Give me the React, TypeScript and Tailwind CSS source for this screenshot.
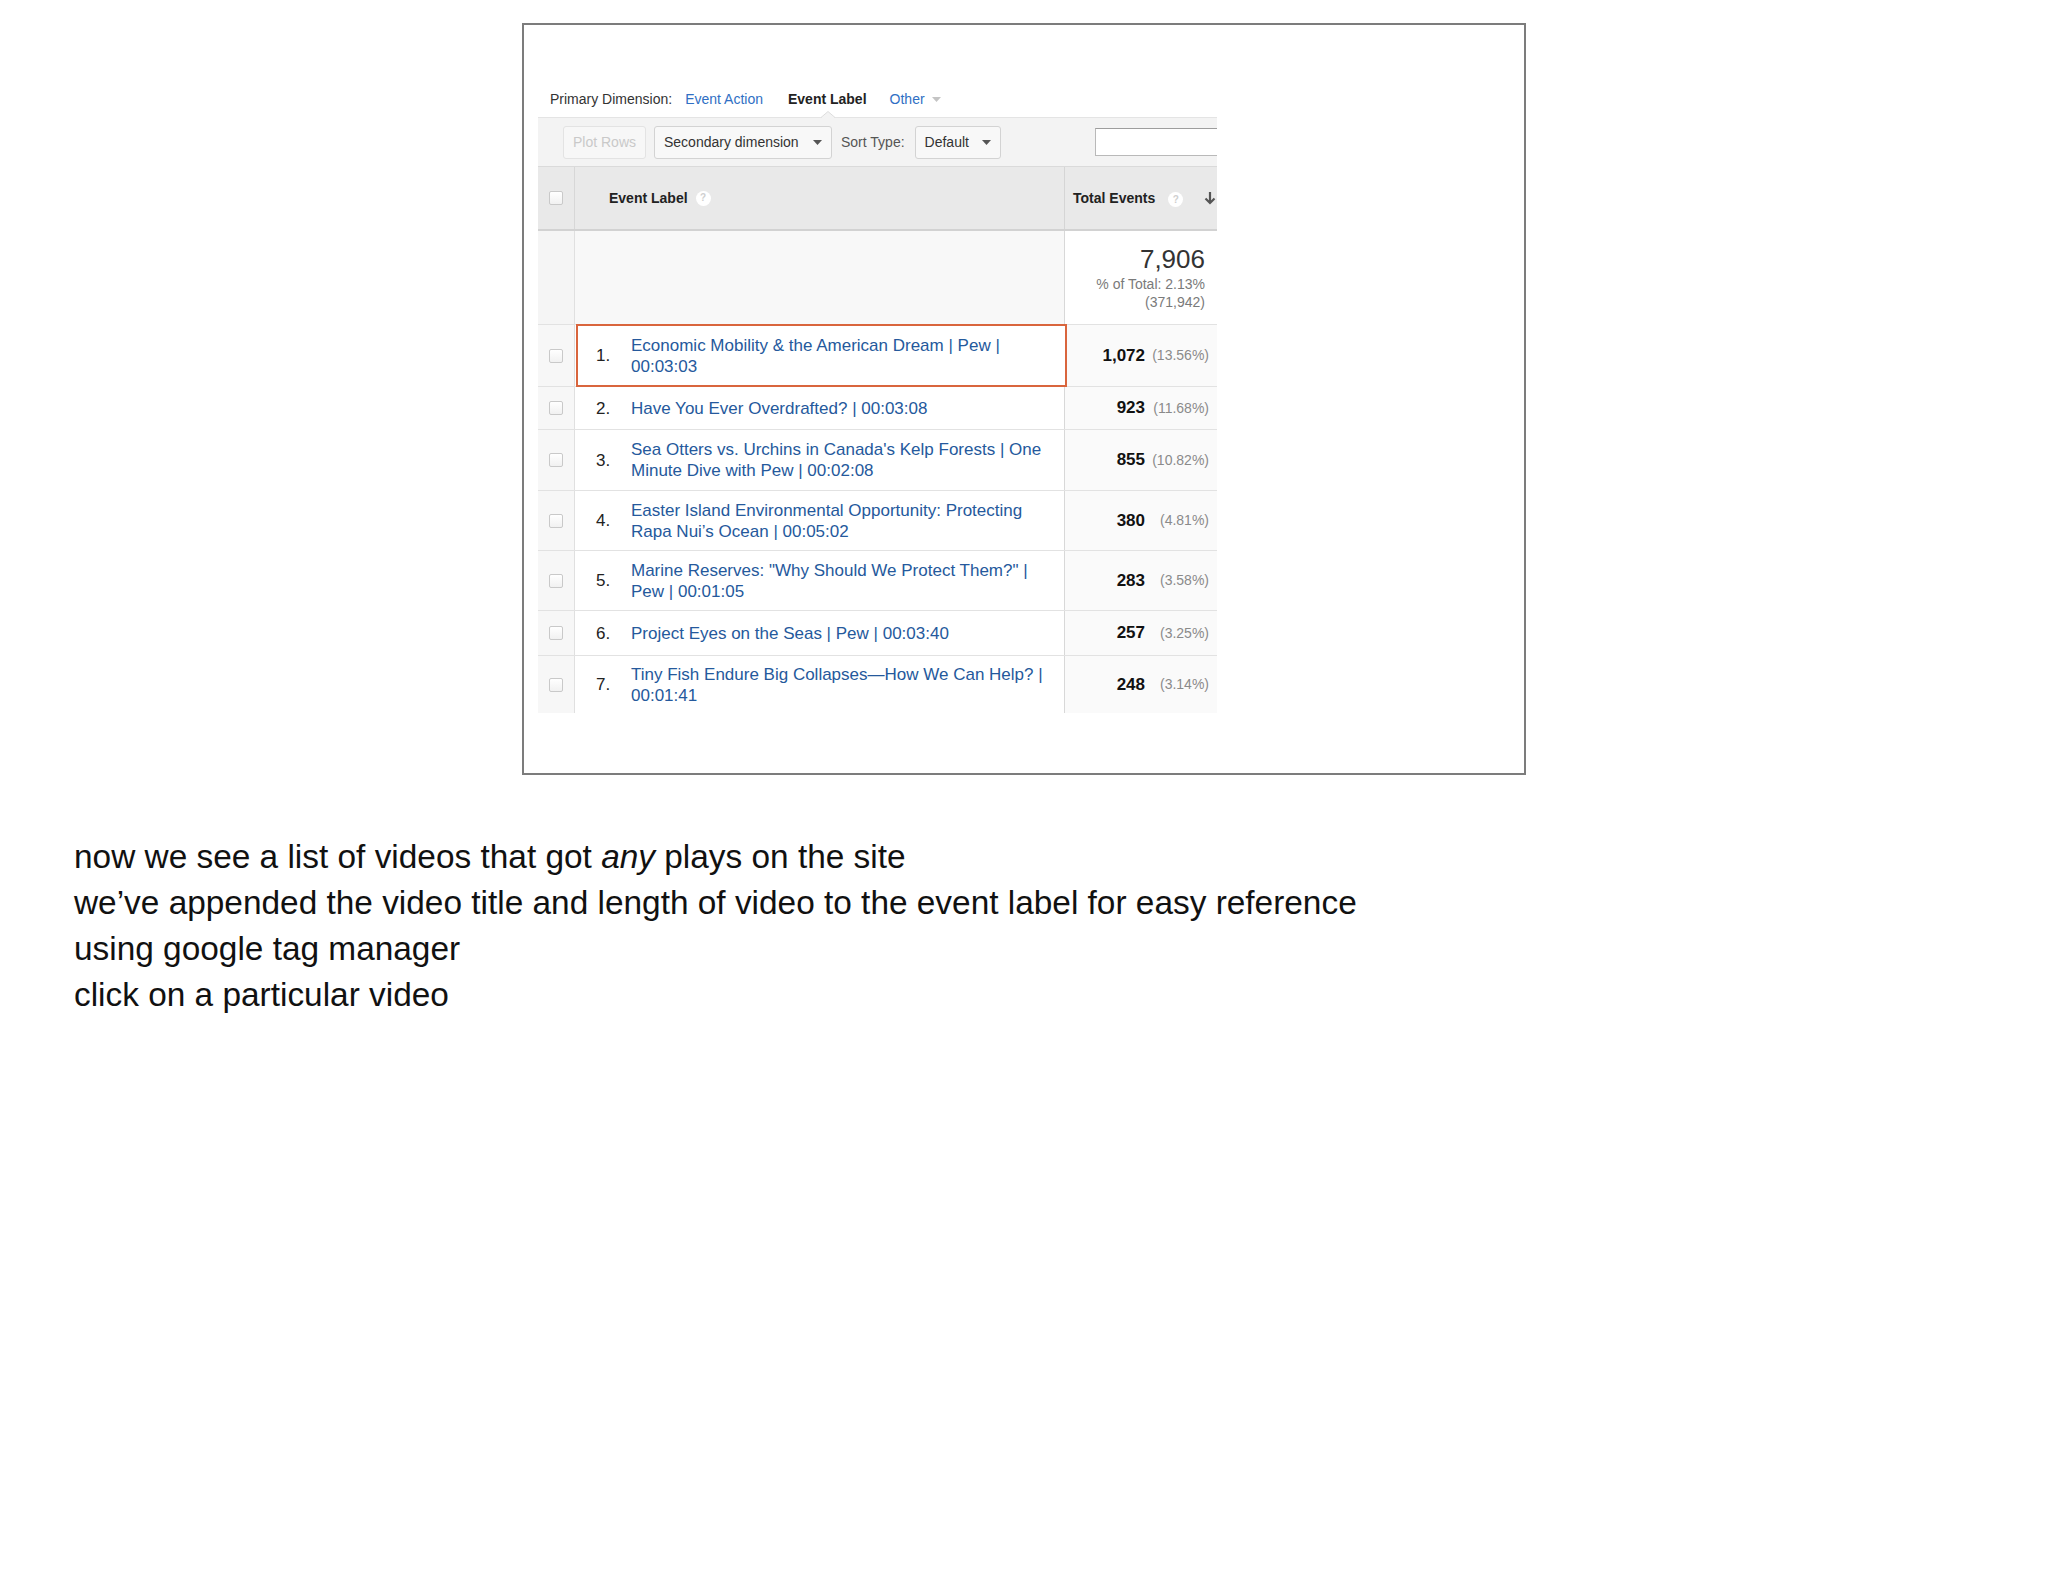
import React from 'react';

type Row = {
  n: number;
  lines: string[];
  total: string;
  pct: string;
  h: string;
  selected?: boolean;
};

const rows: Row[] = [
  { n: 1, lines: ['Economic Mobility & the American Dream | Pew |', '00:03:03'], total: '1,072', pct: '(13.56%)', h: 'h-[62px]', selected: true },
  { n: 2, lines: ['Have You Ever Overdrafted? | 00:03:08'], total: '923', pct: '(11.68%)', h: 'h-[43px]' },
  { n: 3, lines: ["Sea Otters vs. Urchins in Canada's Kelp Forests | One", 'Minute Dive with Pew | 00:02:08'], total: '855', pct: '(10.82%)', h: 'h-[61px]' },
  { n: 4, lines: ['Easter Island Environmental Opportunity: Protecting', 'Rapa Nui\u2019s Ocean | 00:05:02'], total: '380', pct: '(4.81%)', h: 'h-[60px]' },
  { n: 5, lines: ['Marine Reserves: "Why Should We Protect Them?" |', 'Pew | 00:01:05'], total: '283', pct: '(3.58%)', h: 'h-[60px]' },
  { n: 6, lines: ['Project Eyes on the Seas | Pew | 00:03:40'], total: '257', pct: '(3.25%)', h: 'h-[45px]' },
  { n: 7, lines: ['Tiny Fish Endure Big Collapses\u2014How We Can Help? |', '00:01:41'], total: '248', pct: '(3.14%)', h: 'h-[58px]' },
];

const Checkbox = () => (
  <span className="block w-[14px] h-[14px] rounded-[2px] border border-[#c9c9c9] bg-gradient-to-b from-white to-[#f1f1f1]" />
);

const Help = () => (
  <span className="inline-flex items-center justify-center w-[15px] h-[15px] rounded-full bg-white text-[10px] leading-none text-[#cfcfcf]">?</span>
);

const Caret = ({ color = '#555' }: { color?: string }) => (
  <svg width="9" height="5" viewBox="0 0 9 5">
    <path d="M0 0h9L4.5 5z" fill={color} />
  </svg>
);

export default function App() {
  return (
    <div className="w-[2048px] h-[1582px] bg-white overflow-hidden font-['Liberation_Sans',Arial,sans-serif]">
      <div className="ml-[522px] mt-[23px] w-[1004px] h-[752px] border-2 border-[#7c7c7c] pl-[14px] pt-[56px]">
        <div className="w-[679px]">
          {/* primary dimension */}
          <div className="h-[36px] flex items-center pl-[12px] text-[14px] text-[#333] whitespace-nowrap">
            <span>Primary Dimension:</span>
            <span className="ml-[13px] text-[#2f6fc4]">Event Action</span>
            <span className="ml-[25px] font-bold text-[#222]">Event Label</span>
            <span className="ml-[23px] text-[#2f6fc4]">Other</span>
            <span className="ml-[7px] mt-[1px]"><Caret color="#c4c4c4" /></span>
          </div>

          {/* toolbar */}
          <div className="relative h-[49px] bg-[#f3f3f3] border-t border-[#e4e4e4] flex items-center pl-[25px] text-[14px] whitespace-nowrap">
            <svg className="absolute left-[283px] -top-[7px]" width="14" height="7" viewBox="0 0 14 7">
              <path d="M0 7L7 0.5L14 7z" fill="#f3f3f3" />
              <path d="M0 6.5L7 0.5L14 6.5" stroke="#dcdcdc" strokeWidth="1" fill="none" />
            </svg>
            <span className="shrink-0 h-[33px] w-[83px] justify-center flex items-center rounded-[3px] border border-[#e3e3e3] bg-[#f7f7f7] text-[#c9c9c9]">Plot Rows</span>
            <span className="shrink-0 ml-[8px] h-[33px] w-[178px] pl-[9px] pr-[9px] flex items-center justify-between rounded-[3px] border border-[#d3d3d3] bg-[#f8f8f8] text-[#333]">
              Secondary dimension
              <Caret />
            </span>
            <span className="shrink-0 ml-[9px] text-[#555]">Sort Type:</span>
            <span className="shrink-0 ml-[10px] h-[33px] w-[86px] pl-[9px] pr-[9px] flex items-center justify-between rounded-[3px] border border-[#d3d3d3] bg-[#f8f8f8] text-[#333]">
              Default
              <Caret />
            </span>
            <div className="flex-1 min-w-0 overflow-hidden ml-[94px]">
              <span className="block h-[28px] w-[140px] bg-white border border-[#b9b9b9] border-t-[#9d9d9d]" />
            </div>
          </div>

          {/* header */}
          <div className="flex h-[65px] bg-[#e9e9e9] border-t border-[#dadada] border-b-2 border-b-[#d2d2d2] text-[14px] font-bold text-[#222]">
            <div className="w-[37px] border-r border-[#d7d7d7] flex items-center justify-center"><Checkbox /></div>
            <div className="w-[489px] flex items-center pl-[34px] gap-[8px]">Event Label <Help /></div>
            <div className="flex-1 border-l border-[#d5d5d5] flex items-center pl-[8px] whitespace-nowrap">
              <span>Total Events</span>
              <span className="ml-[13px]"><Help /></span>
              <svg className="ml-[21px]" width="12" height="14" viewBox="0 0 12 14">
                <path d="M6 1v11M1.5 7.5L6 12l4.5-4.5" stroke="#555" strokeWidth="2.2" fill="none" />
              </svg>
            </div>
          </div>

          {/* totals */}
          <div className="flex h-[93px]">
            <div className="w-[37px] bg-[#f5f5f5] border-r border-[#e0e0e0]" />
            <div className="w-[489px] bg-[#f8f8f8]" />
            <div className="flex-1 border-l border-[#d8d8d8] bg-white pr-[12px] pt-[12px] flex flex-col items-end">
              <span className="text-[26px] leading-[32px] text-[#333]">7,906</span>
              <span className="text-[14px] leading-[18px] text-[#7a7a7a]">% of Total: 2.13%</span>
              <span className="text-[14px] leading-[18px] text-[#7a7a7a]">(371,942)</span>
            </div>
          </div>

          {/* rows */}
          {rows.map((r) => (
            <div key={r.n} className={`flex ${r.h} border-t border-[#e2e2e2]`}>
              <div className="w-[37px] bg-[#f7f7f7] border-r border-[#e0e0e0] flex items-center justify-center"><Checkbox /></div>
              <div
                className={`w-[489px] bg-white flex items-center text-[17px] leading-[21px] ${
                  r.selected ? 'outline-2 outline-[#d9653d] -outline-offset-1 relative left-[2px] z-10' : ''
                }`}
              >
                <span className={`w-[56px] ${r.selected ? 'pl-[19px]' : 'pl-[21px]'} text-[#222] shrink-0`}>{r.n}.</span>
                <span className={`text-[#25599c] whitespace-nowrap ${r.selected ? '-ml-[2px]' : ''}`}>
                  {r.lines.map((l, i) => (
                    <span key={i} className="block">{l}</span>
                  ))}
                </span>
              </div>
              <div className="flex-1 border-l border-[#d8d8d8] bg-[#fafafa] flex items-center justify-end pr-[8px]">
                <span className="text-[17px] font-bold text-[#111]">{r.total}</span>
                <span className="w-[64px] text-right text-[14px] text-[#8a8a8a]">{r.pct}</span>
              </div>
            </div>
          ))}
        </div>
      </div>

      <div className="ml-[74px] mt-[59px] text-[33.4px] leading-[46px] text-[#111]">
        <p>now we see a list of videos that got <em>any</em> plays on the site</p>
        <p>we&#8217;ve appended the video title and length of video to the event label for easy reference</p>
        <p>using google tag manager</p>
        <p>click on a particular video</p>
      </div>
    </div>
  );
}
